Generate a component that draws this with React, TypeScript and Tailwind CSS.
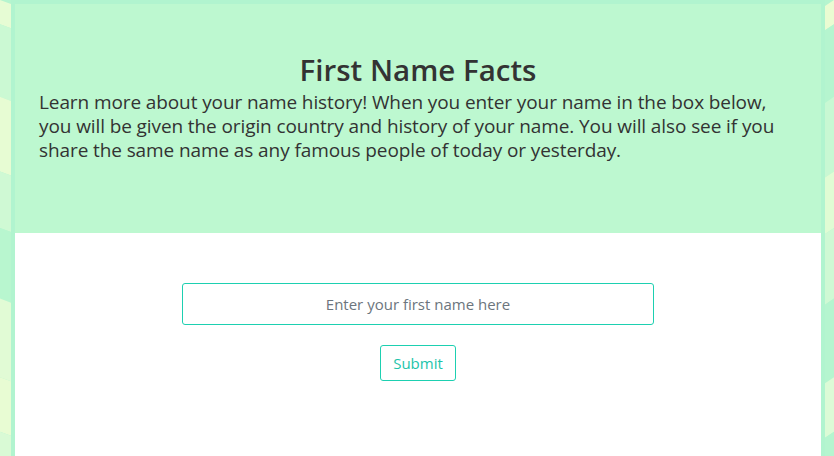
import { useState } from 'react'

const LEFT = ['#e6fcd4', '#cbf9d3', '#e7fcd3', '#cff9d4', '#b8f6cf', '#e1fbd5', '#e8fcd3', '#d9fad5']
const RIGHT = ['#eafcd2', '#b5f5cf', '#c8f8d3', '#e0fcd4', '#cff9d4', '#b5f5cf', '#dcfbd6', '#b5f5cf']
const STOPS = [0, 24, 96, 170, 226, 296, 374, 428, 456]

function Backdrop() {
  return (
    <svg className="absolute inset-0 h-full w-full" viewBox="0 0 834 456" preserveAspectRatio="none">
      <rect width="834" height="456" fill="#b5f5cf" />
      {LEFT.map((c, i) => (
        <polygon key={'l' + i} points={`0,${STOPS[i]} 11,${STOPS[i] + 4} 11,${STOPS[i + 1] + 4} 0,${STOPS[i + 1]}`} fill={c} />
      ))}
      {RIGHT.map((c, i) => (
        <polygon key={'r' + i} points={`825,${STOPS[i] + 6} 834,${STOPS[i]} 834,${STOPS[i + 1]} 825,${STOPS[i + 1] + 6}`} fill={c} />
      ))}
    </svg>
  )
}

export default function App() {
  const [name, setName] = useState('')

  return (
    <div className="relative min-h-screen overflow-hidden" style={{ fontFamily: '"Open Sans", "Noto Sans", sans-serif' }}>
      <Backdrop />
      <div className="relative ml-[11px] w-[814px] border-4 border-b-0 border-[#b1f4cf]">
        {/* Header */}
        <header className="h-[229px] bg-[#bdf8d0] px-6 pt-[46px] text-[#333333]">
          <h1 className="text-center text-[29.5px] leading-[40px] font-semibold">First Name Facts</h1>
          <p className="text-[19px] leading-[24px] tracking-[-0.1px]">
            Learn more about your name history! When you enter your name in the box below, you will be given the origin
            country and history of your name. You will also see if you share the same name as any famous people of today
            or yesterday.
          </p>
        </header>

        {/* Form */}
        <form className="flex h-[227px] flex-col items-center bg-white pt-[50px]" onSubmit={e => e.preventDefault()}>
          <input
            value={name}
            onChange={e => setName(e.target.value)}
            placeholder="Enter your first name here"
            className="h-[42px] w-[472px] rounded-[3px] border border-[#1dd0b1] px-3 text-center text-[15px] text-[#555] outline-none placeholder:text-[#6c757d]"
          />
          <button
            type="submit"
            className="mt-[20px] h-[36px] w-[76px] rounded-[3px] border border-[#1dd0b1] text-[15px] text-[#1dc4aa]"
          >
            Submit
          </button>
        </form>
      </div>
    </div>
  )
}
